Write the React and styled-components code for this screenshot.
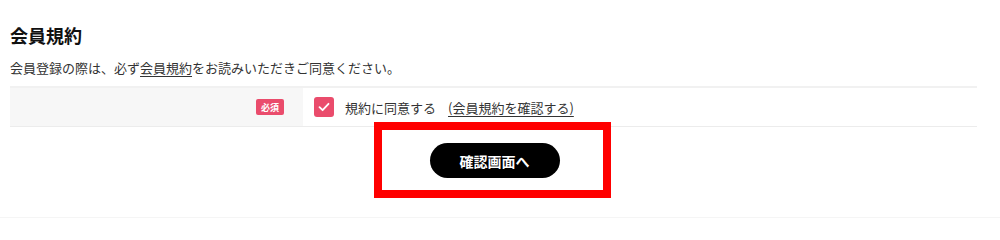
import React from "react";
import styled, { createGlobalStyle } from "styled-components";

const GlobalStyle = createGlobalStyle`
  body {
    margin: 0;
    background: #fff;
    font-family: "Noto Sans CJK JP", "Noto Sans", sans-serif;
    color: #333;
  }
`;

const Page = styled.div`
  position: relative;
  width: 1000px;
  height: 218px;
  overflow: hidden;
`;

const Section = styled.section`
  width: 967px;
  margin-left: 10px;
  padding-top: 22px;
`;

const Heading = styled.h2`
  margin: 0;
  font-size: 18px;
  line-height: 26px;
  font-weight: 700;
  color: #111;
`;

const Lead = styled.p`
  margin: 10px 0 0;
  font-size: 13px;
  line-height: 20px;
  color: #333;
`;

const Link = styled.a`
  color: #333;
  text-decoration: underline;
  text-underline-offset: 3px;
  text-decoration-thickness: 1px;
  margin-left: ${(props) => props.$gap || 0}px;
`;

const Row = styled.div`
  display: grid;
  grid-template-columns: 293px 1fr;
  margin-top: 8px;
  border-top: 2px solid #f1f1f1;
  border-bottom: 1px solid #ececec;
  height: 38px;
`;

const LabelCell = styled.div`
  display: flex;
  align-items: center;
  justify-content: flex-end;
  padding-right: 19px;
  background: #f7f7f7;
`;

const Badge = styled.span`
  display: inline-flex;
  align-items: center;
  justify-content: center;
  width: 28px;
  height: 16px;
  border-radius: 2px;
  background: #ea4c6c;
  color: #fff;
  font-size: 9px;
  font-weight: 700;
`;

const InputCell = styled.label`
  display: flex;
  align-items: center;
  padding-left: 11px;
  font-size: 13px;
  color: #333;
`;

const Box = styled.span`
  display: inline-flex;
  align-items: center;
  justify-content: center;
  width: 20px;
  height: 20px;
  border-radius: 3px;
  background: #ea4c6c;
  margin-right: 11px;
`;

const Actions = styled.div`
  display: flex;
  justify-content: center;
  padding: 16px 0 39px;
  border-bottom: 2px solid #f5f5f5;
  margin-left: -10px;
  margin-right: -23px;
`;

const Button = styled.button`
  width: 130px;
  height: 35px;
  margin-left: -11px;
  border: 0;
  border-radius: 18px;
  background: #000;
  color: #fff;
  font-family: inherit;
  font-size: 14px;
  font-weight: 700;
  cursor: pointer;
`;

const Highlight = styled.div`
  position: absolute;
  left: 374px;
  top: 122px;
  width: 237px;
  height: 76px;
  box-sizing: border-box;
  border: 8px solid #ff0000;
  pointer-events: none;
`;

export default function App() {
  return (
    <Page>
      <GlobalStyle />
      <Section>
        <Heading>会員規約</Heading>
        <Lead>
          会員登録の際は、必ず<Link href="#">会員規約</Link>をお読みいただきご同意ください。
        </Lead>
        <Row>
          <LabelCell>
            <Badge>必須</Badge>
          </LabelCell>
          <InputCell>
            <Box>
              <svg width="12" height="10" viewBox="0 0 12 10">
                <path d="M1.5 5.2 L4.6 8.2 L10.5 1.8" fill="none" stroke="#fff" strokeWidth="1.8" strokeLinecap="round" strokeLinejoin="round" />
              </svg>
            </Box>
            規約に同意する
            <Link href="#" $gap={12}>(会員規約を確認する)</Link>
          </InputCell>
        </Row>
        <Actions>
          <Button>確認画面へ</Button>
        </Actions>
      </Section>
      <Highlight />
    </Page>
  );
}
